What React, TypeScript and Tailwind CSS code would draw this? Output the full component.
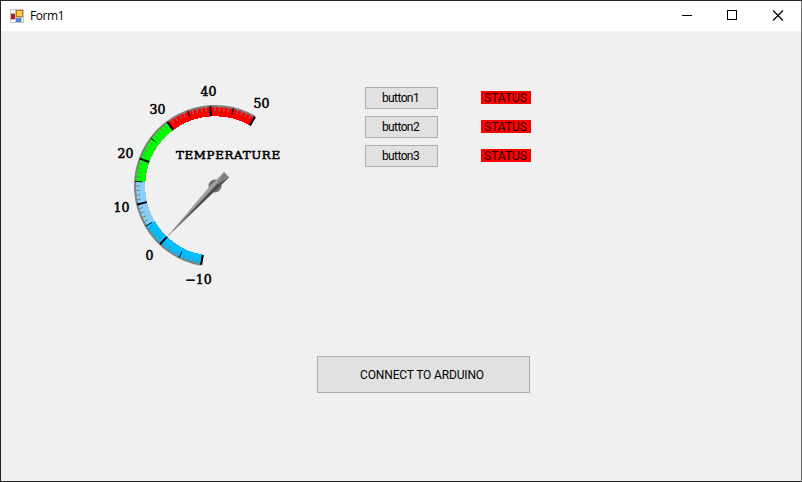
const CX = 215;
const CY = 186;

const point = (value: number, r: number) => {
  const a = ((100 + ((value + 10) * 200) / 60) * Math.PI) / 180;
  return [CX + r * Math.cos(a), CY + r * Math.sin(a)];
};

const arc = (from: number, to: number, r: number) => {
  const [x1, y1] = point(from, r);
  const [x2, y2] = point(to, r);
  return `M${x1} ${y1}A${r} ${r} 0 ${to - from > 54 ? 1 : 0} 1 ${x2} ${y2}`;
};

const ranges = [
  { from: -10, to: 5, color: '#00bfff' },
  { from: 5, to: 15, color: '#87cefa' },
  { from: 15, to: 30, color: '#00ff00' },
  { from: 30, to: 50, color: '#ff0000' },
];

const labels: [string, number, number][] = [
  ['-10', 198.5, 284],
  ['0', 149.5, 260],
  ['10', 121.5, 212],
  ['20', 125.5, 158],
  ['30', 157.5, 114],
  ['40', 208.5, 96],
  ['50', 261.5, 108],
];

function Tick({ value }: { value: number }) {
  const major = value % 10 === 0;
  const half = value % 5 === 0;
  const [x1, y1] = point(value, major ? 70 : half ? 73 : 75);
  const [x2, y2] = point(value, 80);
  return (
    <line x1={x1} y1={y1} x2={x2} y2={y2} stroke={half ? '#000' : '#808080'} strokeWidth={major ? 2 : 1} />
  );
}

function Gauge() {
  const values = Array.from({ length: 61 }, (_, i) => i - 10);
  return (
    <svg width="200" height="220" viewBox="100 75 200 220" className="block">
      {ranges.map((r) => (
        <path key={r.from} d={arc(r.from, r.to, 75)} fill="none" stroke={r.color} strokeWidth="10.5" shapeRendering="crispEdges" />
      ))}
      <path d={arc(-10, 50, 80)} fill="none" stroke="#808080" strokeWidth="2" />
      {values.map((v) => (
        <Tick key={v} value={v} />
      ))}
      <g fontFamily="'DejaVu Serif', serif" fontSize="12.5" fill="#000" stroke="#000" strokeWidth="0.55">
        {labels.map(([text, x, y]) => (
          <text key={text} x={x} y={y} textAnchor="middle">
            {text.replace('-', '−')}
          </text>
        ))}
        <text x="176" y="159" fontSize="11.8" textLength="104">TEMPERATURE</text>
      </g>
      <circle cx="215" cy="186" r="6.5" fill="#707070" />
      <path d="M166 238L210 186L224 172L226.500 174.500Z" fill="#a0a0a0" />
      <path d="M166 238L215.500 190.500L229 177.500L226 174.500Z" fill="#4d4d4d" />
      <path d="M215 186L224 172L229 177.500Z" fill="#808080" />
    </svg>
  );
}

function FormIcon() {
  return (
    <svg width="14" height="14" viewBox="0 0 14 14" shapeRendering="crispEdges">
      <rect width="14" height="14" fill="#c4c4c4" />
      <path d="M1 1h4v3H1zM1 11h4v2H1z" fill="#fff" />
      <path d="M6 1h7v7H6z" fill="#b77e10" />
      <path d="M7 2h5v5H7z" fill="#ffcc3d" />
      <path d="M1 5h4v5H1z" fill="#b01c16" />
      <path d="M6 9h5v4H6z" fill="#4d88dc" />
      <path d="M12 9h1v4h-1z" fill="#fff" />
    </svg>
  );
}

export default function App() {
  return (
    <div className="flex h-[482px] w-[802px] flex-col border border-[#242424] border-r-[#6b6b6b] bg-[#f0f0f0] font-['Roboto',sans-serif] text-xs text-black">
      <header className="flex h-[30px] shrink-0 items-center bg-white pl-[9px]">
        <FormIcon />
        <h1 className="ml-1.5 font-['Open_Sans',sans-serif] text-xs tracking-[-0.4px]">Form1</h1>
        <div className="ml-auto flex">
          <svg width="138" height="30" viewBox="663 1 138 30" fill="none" stroke="#000">
            <path d="M682 15.500h10" />
            <rect x="727.500" y="10.500" width="9" height="9" />
            <path d="M773 10.500l10 10M783 10.500l-10 10" strokeWidth="1.2" />
          </svg>
        </div>
      </header>
      <main className="flex pl-[99px] pt-11">
        <Gauge />
        <div className="ml-[65px] mt-3 flex flex-col gap-[7px]">
          {[1, 2, 3].map((n) => (
            <div key={n} className="flex h-[22px] items-start">
              <button className="h-[22px] w-[73px] border border-[#adadad] bg-[#e1e1e1] pr-0.5 leading-5 tracking-[-0.6px]">button{n}</button>
              <span className="ml-[43px] mt-1 h-[13px] w-[50px] bg-[#ff0000] pr-px text-center leading-[14px] text-[#1c0000]">STATUS</span>
            </div>
          ))}
        </div>
      </main>
      <button className="ml-[316px] mt-[61px] h-[37px] w-[213px] border border-[#adadad] bg-[#e1e1e1] pr-[3px] tracking-[-0.15px]">
        CONNECT TO ARDUINO
      </button>
    </div>
  );
}
